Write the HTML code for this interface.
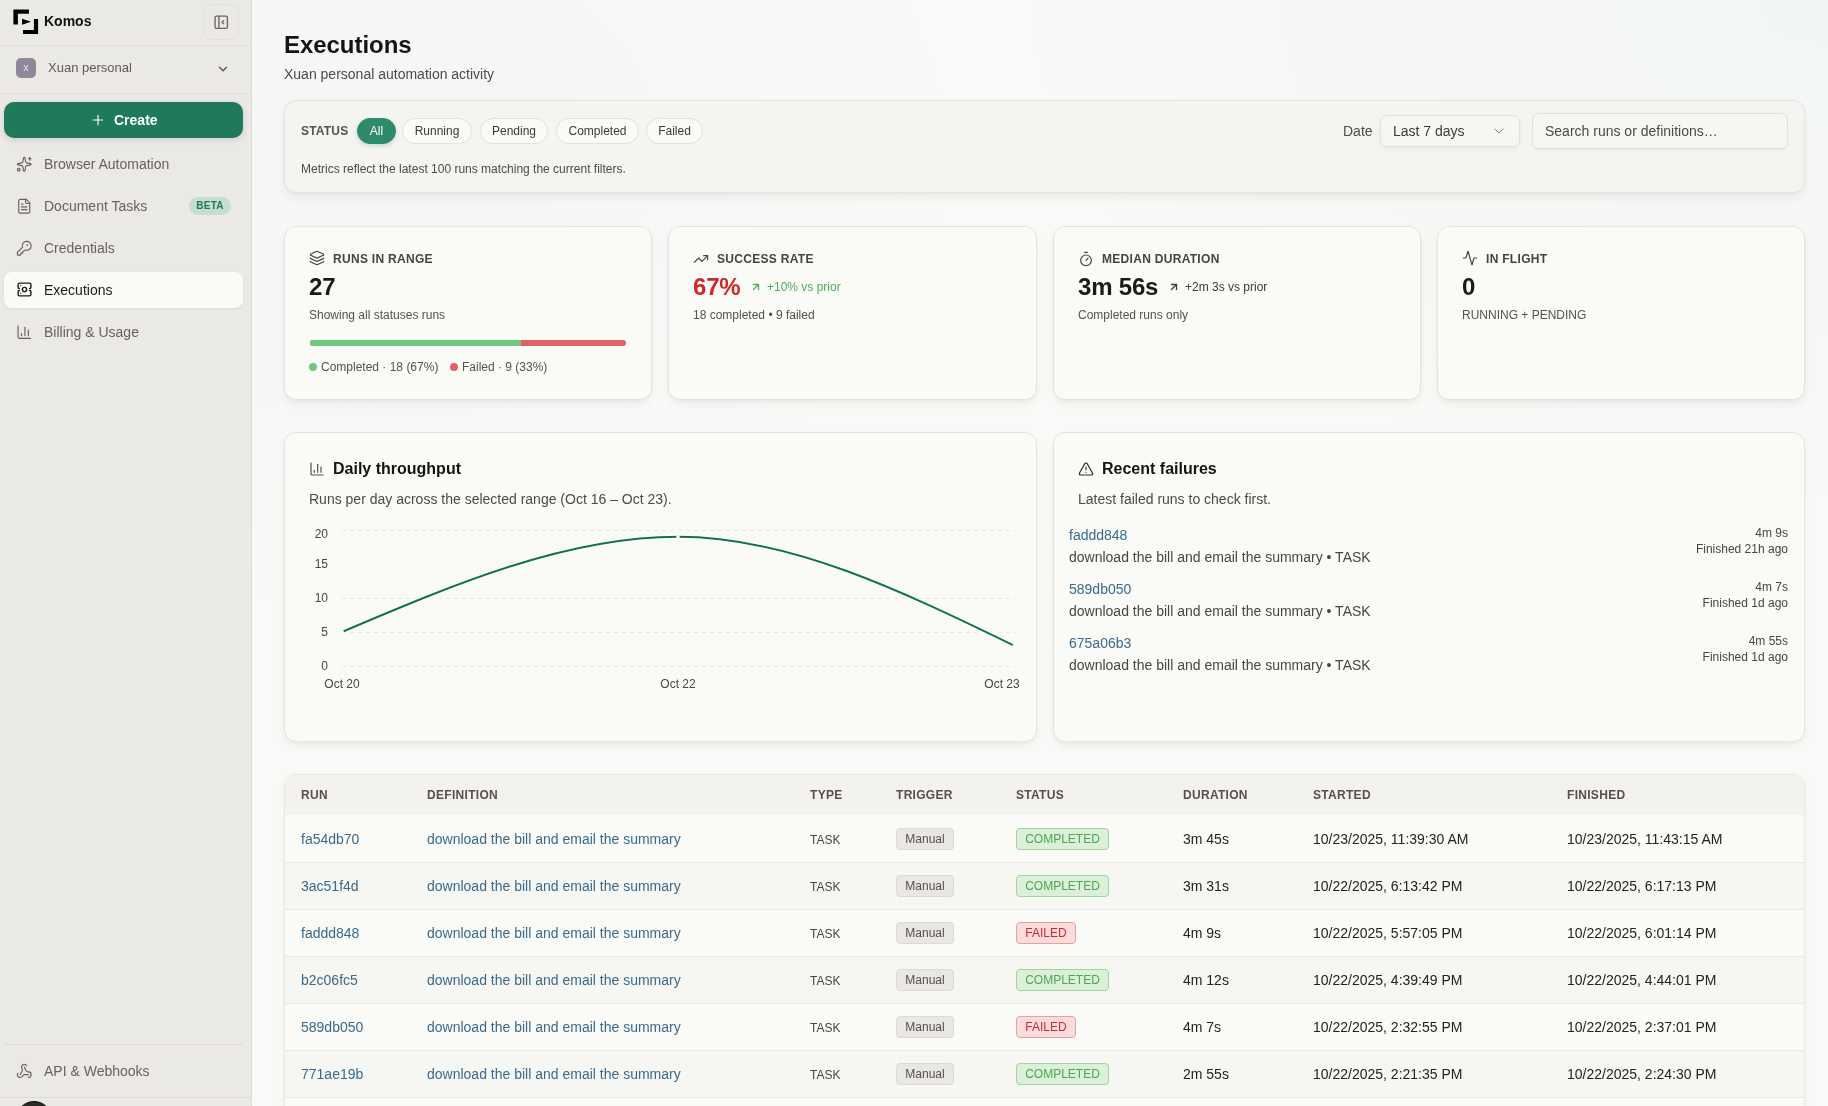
<!DOCTYPE html>
<html><head><meta charset="utf-8">
<style>
*{box-sizing:border-box;margin:0;padding:0}
html,body{width:1828px;height:1106px;overflow:hidden}
#root{position:absolute;left:0;top:0;width:1828px;height:1106px;overflow:hidden;will-change:transform;background:radial-gradient(700px 450px at 250px 150px, rgba(240,237,248,0.4), rgba(240,237,248,0) 100%), radial-gradient(800px 500px at 1828px 0px, rgba(232,242,240,0.45), rgba(232,242,240,0) 100%), #f9f9f7}
body{font-family:"Liberation Sans",sans-serif;background:#f8f7f5;color:#1c1917;position:relative}
.a{position:absolute;white-space:nowrap;line-height:normal}
svg{position:absolute;overflow:visible}
.ic{fill:none;stroke:currentColor;stroke-width:2;stroke-linecap:round;stroke-linejoin:round}
#side{position:absolute;left:0;top:0;width:252px;height:1106px;background:#ebe9e5;border-right:1px solid #dfdcd7}
.hr{position:absolute;height:1px;background:#dcd9d4}
.nav{font-size:14px;color:#67625c}
.card{position:absolute;background:#fafaf6;border:1px solid #e6e4df;border-radius:12px;box-shadow:0 5px 10px -2px rgba(40,40,30,0.07), 0 1px 3px rgba(40,40,30,0.03)}
.lbl{font-size:12px;font-weight:bold;color:#48433d;letter-spacing:0.3px}
.big{font-size:24px;font-weight:bold;color:#1a1a1a;letter-spacing:-0.2px}
.sub{font-size:12px;color:#57524c}
.badge{position:absolute;height:22px;border-radius:4px;border:1px solid;font-size:12px;line-height:20px;text-align:center;white-space:nowrap}
.pill{position:absolute;height:26px;border-radius:13px;border:1px solid #e3e1dc;background:#fafaf6;font-size:12px;color:#3f3a35;line-height:24px;text-align:center}
</style></head><body>
<div id="root">

<!-- SIDEBAR -->
<div id="side">
  <svg style="left:13px;top:9px" width="25" height="25" viewBox="0 0 25 25">
    <path d="M0.4 0.4H15.9V4.8H4.9V15.6H0.4Z" fill="#000"/>
    <path d="M25.1 10V25H10V21H20.9V10Z" fill="#000"/>
    <path d="M9 9.8L18 12.8L9 15.8Z" fill="#000"/>
  </svg>
  <div class="a" style="left:44px;top:13px;font-size:14px;font-weight:bold;color:#111">Komos</div>
  <div style="position:absolute;left:203px;top:4px;width:36px;height:36px;border:1px solid #e2e0db;border-radius:9px"></div>
  <svg class="ic" style="left:211.8px;top:12.6px;color:#6b6864;stroke-width:1.8" width="18.5" height="18.5" viewBox="0 0 24 24">
    <rect x="4" y="4" width="16" height="16" rx="2"/><path d="M9 4v16"/><path d="M15 10l-2 2l2 2"/>
  </svg>
  <div class="hr" style="left:0;top:45px;width:251px;background:#e0ddd8"></div>
  <div style="position:absolute;left:16px;top:58px;width:20px;height:20px;border-radius:5px;background:#8f8898;color:#e4e0e8;font-size:11px;text-align:center;line-height:18px">x</div>
  <div class="a" style="left:48px;top:60px;font-size:13px;color:#5f5a55">Xuan personal</div>
  <svg class="ic" style="left:216px;top:61.8px;color:#55514c;stroke-width:2.2" width="14" height="14" viewBox="0 0 24 24"><path d="M6 9l6 6l6-6"/></svg>
  <div class="hr" style="left:0;top:93px;width:251px;background:#e0ddd8"></div>

  <div style="position:absolute;left:4px;top:102px;width:239px;height:36px;border-radius:10px;background:#1e7a5a;box-shadow:0 2px 6px rgba(0,0,0,0.12)"></div>
  <svg class="ic" style="left:91px;top:113px;color:#fff;stroke-width:2" width="14" height="14" viewBox="0 0 24 24"><path d="M12 4v16M4 12h16"/></svg>
  <div class="a" style="left:114px;top:112px;font-size:14px;font-weight:bold;color:#fff">Create</div>

  <!-- nav -->
  <svg class="ic" style="left:15.75px;top:155.75px;color:#66615b;stroke-width:1.65" width="16.5" height="16.5" viewBox="0 0 24 24"><path d="M11.017 2.814a1 1 0 0 1 1.966 0l1.051 5.558a2 2 0 0 0 1.594 1.594l5.558 1.051a1 1 0 0 1 0 1.966l-5.558 1.051a2 2 0 0 0-1.594 1.594l-1.051 5.558a1 1 0 0 1-1.966 0l-1.051-5.558a2 2 0 0 0-1.594-1.594l-5.558-1.051a1 1 0 0 1 0-1.966l5.558-1.051a2 2 0 0 0 1.594-1.594z"/><path d="M20 2v4"/><path d="M22 4h-4"/><circle cx="4" cy="20" r="2"/></svg>
  <div class="a nav" style="left:44px;top:156px">Browser Automation</div>

  <svg class="ic" style="left:15.75px;top:197.75px;color:#66615b;stroke-width:1.65" width="16.5" height="16.5" viewBox="0 0 24 24"><path d="M15 2H6a2 2 0 0 0-2 2v16a2 2 0 0 0 2 2h12a2 2 0 0 0 2-2V7Z"/><path d="M14 2v4a2 2 0 0 0 2 2h4"/><path d="M10 9H8"/><path d="M16 13H8"/><path d="M16 17H8"/></svg>
  <div class="a nav" style="left:44px;top:198px">Document Tasks</div>
  <div style="position:absolute;left:189px;top:197px;width:42px;height:18px;border-radius:9px;background:#c6ddd0;color:#1f7a55;font-size:10px;font-weight:bold;letter-spacing:0.2px;text-align:center;line-height:18px">BETA</div>

  <svg class="ic" style="left:15.75px;top:239.75px;color:#66615b;stroke-width:1.65" width="16.5" height="16.5" viewBox="0 0 24 24"><path d="M2.586 17.414A2 2 0 0 0 2 18.828V21a1 1 0 0 0 1 1h3a1 1 0 0 0 1-1v-1a1 1 0 0 1 1-1h1a1 1 0 0 0 1-1v-1a1 1 0 0 1 1-1h.172a2 2 0 0 0 1.414-.586l.814-.814a6.5 6.5 0 1 0-4-4z"/><circle cx="16.5" cy="7.5" r=".5" fill="currentColor"/></svg>
  <div class="a nav" style="left:44px;top:240px">Credentials</div>

  <div style="position:absolute;left:4px;top:272px;width:239px;height:36px;border-radius:8px;background:#fafaf7;box-shadow:0 1px 3px rgba(0,0,0,0.06)"></div>
  <svg class="ic" style="left:15.5px;top:281px;color:#1c1a18;stroke-width:2" width="17" height="17" viewBox="0 0 24 24"><path d="M4.8 10.6A1.8 1.8 0 0 1 3 8.8V5A2 2 0 0 1 5 3H19A2 2 0 0 1 21 5V8.8A1.8 1.8 0 0 1 19.2 10.6"/><path d="M4.8 13.4A1.8 1.8 0 0 0 3 15.2V19A2 2 0 0 0 5 21H19A2 2 0 0 0 21 19V15.2A1.8 1.8 0 0 0 19.2 13.4"/><circle cx="12" cy="12" r="3"/><rect x="5.6" y="5.6" width="2" height="2" fill="currentColor" stroke="none" opacity="0.65"/><rect x="5.6" y="16.4" width="2" height="2" fill="currentColor" stroke="none" opacity="0.65"/></svg>
  <div class="a nav" style="left:44px;top:282px;color:#1c1a18">Executions</div>

  <svg class="ic" style="left:15.75px;top:323.75px;color:#66615b;stroke-width:1.65" width="16.5" height="16.5" viewBox="0 0 24 24"><path d="M3 3v16a2 2 0 0 0 2 2h16"/><path d="M18 17V9"/><path d="M13 17V5"/><path d="M8 17v-3"/></svg>
  <div class="a nav" style="left:44px;top:324px">Billing &amp; Usage</div>

  <div class="hr" style="left:4px;top:1044px;width:239px;background:#dedbd6"></div>
  <svg class="ic" style="left:15.75px;top:1062.75px;color:#66615b;stroke-width:1.65" width="16.5" height="16.5" viewBox="0 0 24 24"><path d="M18 16.98h-5.99c-1.1 0-1.95.94-2.48 1.9A4 4 0 0 1 2 17c.01-.7.2-1.4.57-2"/><path d="m6 17 3.13-5.78c.53-.97.1-2.18-.5-3.1a4 4 0 1 1 6.89-4.06"/><path d="m12 6 3.13 5.73C15.66 12.7 16.9 13 18 13a4 4 0 0 1 0 8"/></svg>
  <div class="a nav" style="left:44px;top:1063px">API &amp; Webhooks</div>
  <div class="hr" style="left:0;top:1097px;width:251px;background:#dedbd6"></div>
  <div style="position:absolute;left:16px;top:1101px;width:36px;height:36px;border-radius:18px;background:#2b2a28;border:1px solid #111"></div>
</div>

<!-- MAIN HEADER -->
<div class="a" style="left:284px;top:31px;font-size:24px;font-weight:bold;color:#151412;letter-spacing:-0.05px">Executions</div>
<div class="a" style="left:284px;top:66px;font-size:14px;color:#4f4a45">Xuan personal automation activity</div>

<!-- FILTER PANEL -->
<div class="card" style="left:284px;top:100px;width:1521px;height:93px;background:#f4f4f0;border-color:#e4e3de;box-shadow:0 6px 12px -3px rgba(40,40,30,0.08), 0 1px 3px rgba(40,40,30,0.03)"></div>
<div class="a lbl" style="left:301px;top:124px;color:#57524c;letter-spacing:0.2px">STATUS</div>
<div class="pill" style="left:357px;top:118px;width:39px;background:#2e8a6a;border-color:#2e8a6a;color:#fff;box-shadow:0 2px 4px rgba(30,120,90,0.2)">All</div>
<div class="pill" style="left:402px;top:118px;width:70px">Running</div>
<div class="pill" style="left:480px;top:118px;width:68px">Pending</div>
<div class="pill" style="left:556px;top:118px;width:83px">Completed</div>
<div class="pill" style="left:646px;top:118px;width:57px">Failed</div>
<div class="a" style="left:301px;top:162px;font-size:12px;color:#4f4a45">Metrics reflect the latest 100 runs matching the current filters.</div>

<div class="a" style="left:1343px;top:123px;font-size:14px;color:#4f4a45">Date</div>
<div style="position:absolute;left:1380px;top:115px;width:140px;height:32px;border:1px solid #e2e0db;border-radius:7px;background:#f6f6f2;box-shadow:0 2px 5px rgba(0,0,0,0.05)"></div>
<div class="a" style="left:1393px;top:123px;font-size:14px;color:#3f3a35">Last 7 days</div>
<svg class="ic" style="left:1491px;top:123px;color:#85807a;stroke-width:1.5" width="16" height="16" viewBox="0 0 24 24"><path d="M6 9l6 6l6-6"/></svg>
<div style="position:absolute;left:1532px;top:113px;width:256px;height:36px;border:1px solid #e2e0db;border-radius:7px;background:#f6f6f2;box-shadow:0 2px 5px rgba(0,0,0,0.04)"></div>
<div class="a" style="left:1545px;top:123px;font-size:14px;color:#4f4a45">Search runs or definitions…</div>

<!-- METRIC CARDS -->
<div class="card" style="left:284px;top:226px;width:368.25px;height:173.5px"></div>
<div class="card" style="left:668.25px;top:226px;width:368.25px;height:173.5px"></div>
<div class="card" style="left:1052.5px;top:226px;width:368.25px;height:173.5px"></div>
<div class="card" style="left:1436.75px;top:226px;width:368.25px;height:173.5px"></div>

<!-- card 1 -->
<svg class="ic" style="left:309px;top:250px;color:#48433d;stroke-width:1.8" width="16" height="16" viewBox="0 0 24 24"><path d="M12.83 2.18a2 2 0 0 0-1.66 0L2.6 6.08a1 1 0 0 0 0 1.83l8.58 3.91a2 2 0 0 0 1.66 0l8.58-3.9a1 1 0 0 0 0-1.83z"/><path d="M2 12a1 1 0 0 0 .58.91l8.6 3.91a2 2 0 0 0 1.65 0l8.58-3.9A1 1 0 0 0 22 12"/><path d="M2 17a1 1 0 0 0 .58.91l8.6 3.91a2 2 0 0 0 1.65 0l8.58-3.9A1 1 0 0 0 22 17"/></svg>
<div class="a lbl" style="left:333px;top:252px">RUNS IN RANGE</div>
<div class="a big" style="left:309px;top:273px">27</div>
<div class="a sub" style="left:309px;top:308px">Showing all statuses runs</div>
<div style="position:absolute;left:310px;top:340px;width:316px;height:6px;border-radius:3px;background:#e06266;overflow:hidden"><div style="width:211px;height:6px;background:#72c77f"></div></div>
<div style="position:absolute;left:309px;top:363px;width:8px;height:8px;border-radius:4px;background:#72c77f"></div>
<div class="a sub" style="left:321px;top:360px">Completed · 18 (67%)</div>
<div style="position:absolute;left:450px;top:363px;width:8px;height:8px;border-radius:4px;background:#e06266"></div>
<div class="a sub" style="left:462px;top:360px">Failed · 9 (33%)</div>

<!-- card 2 -->
<svg class="ic" style="left:693px;top:251px;color:#48433d;stroke-width:1.8" width="16" height="16" viewBox="0 0 24 24"><path d="M16 7h6v6"/><path d="m22 7-8.5 8.5-5-5L2 17"/></svg>
<div class="a lbl" style="left:717px;top:252px">SUCCESS RATE</div>
<div class="a big" style="left:693px;top:273px;color:#d0262e">67%</div>
<svg class="ic" style="left:750px;top:281px;color:#4caf5a;stroke-width:2.6" width="12" height="12" viewBox="0 0 24 24"><path d="M7 7h10v10"/><path d="M7 17 17 7"/></svg>
<div class="a sub" style="left:767px;top:280px;color:#4caf5a">+10% vs prior</div>
<div class="a sub" style="left:693px;top:308px">18 completed • 9 failed</div>

<!-- card 3 -->
<svg class="ic" style="left:1078px;top:251px;color:#48433d;stroke-width:1.8" width="16" height="16" viewBox="0 0 24 24"><path d="M10 2h4"/><path d="M12 14l3-3"/><circle cx="12" cy="14" r="8"/></svg>
<div class="a lbl" style="left:1102px;top:252px">MEDIAN DURATION</div>
<div class="a big" style="left:1078px;top:273px">3m 56s</div>
<svg class="ic" style="left:1168px;top:281px;color:#3f3a35;stroke-width:2.6" width="12" height="12" viewBox="0 0 24 24"><path d="M7 7h10v10"/><path d="M7 17 17 7"/></svg>
<div class="a sub" style="left:1185px;top:280px;color:#3f3a35">+2m 3s vs prior</div>
<div class="a sub" style="left:1078px;top:308px">Completed runs only</div>

<!-- card 4 -->
<svg class="ic" style="left:1462px;top:250px;color:#48433d;stroke-width:1.8" width="16" height="16" viewBox="0 0 24 24"><path d="M22 12h-2.48a2 2 0 0 0-1.93 1.46l-2.35 8.36a.25.25 0 0 1-.48 0L9.24 2.18a.25.25 0 0 0-.48 0l-2.35 8.36A2 2 0 0 1 4.49 12H2"/></svg>
<div class="a lbl" style="left:1486px;top:252px">IN FLIGHT</div>
<div class="a big" style="left:1462px;top:273px">0</div>
<div class="a sub" style="left:1462px;top:308px">RUNNING + PENDING</div>


<!-- THROUGHPUT CARD -->
<div class="card" style="left:284px;top:432px;width:752.5px;height:309.5px"></div>
<svg class="ic" style="left:309px;top:461px;color:#57524c;stroke-width:1.8" width="16" height="16" viewBox="0 0 24 24"><path d="M3 3v16a2 2 0 0 0 2 2h16"/><path d="M18 17V9"/><path d="M13 17V5"/><path d="M8 17v-3"/></svg>
<div class="a" style="left:333px;top:460px;font-size:16px;font-weight:bold;color:#151412">Daily throughput</div>
<div class="a" style="left:309px;top:491px;font-size:14px;color:#4f4a45">Runs per day across the selected range (Oct 16 – Oct 23).</div>
<svg style="left:0;top:0" width="1828" height="1106">
  <g stroke="#e9e8e3" stroke-width="1" stroke-dasharray="4 4">
    <line x1="342" y1="530.5" x2="1015" y2="530.5"/>
    <line x1="342" y1="598.5" x2="1015" y2="598.5"/>
    <line x1="342" y1="632.5" x2="1015" y2="632.5"/>
    <line x1="342" y1="666.5" x2="1015" y2="666.5"/>
  </g>
  <g font-family="Liberation Sans" font-size="12" fill="#4a4540" text-anchor="end">
    <text x="328" y="538">20</text><text x="328" y="568">15</text><text x="328" y="602">10</text><text x="328" y="636">5</text><text x="328" y="670">0</text>
  </g>
  <g font-family="Liberation Sans" font-size="12" fill="#4a4540" text-anchor="middle">
    <text x="342" y="688">Oct 20</text><text x="678" y="688">Oct 22</text><text x="1002" y="688">Oct 23</text>
  </g>
  <path d="M342,632 C454,584.4 566,536.8 678,536.8 C790,536.8 902,591.2 1014,645.6" fill="none" stroke="#ffffff" stroke-width="5" stroke-opacity="0.9"/>
  <path d="M342,632 C454,584.4 566,536.8 678,536.8 C790,536.8 902,591.2 1014,645.6" fill="none" stroke="#137050" stroke-width="2"/>
  <g fill="#fff"><circle cx="342" cy="632" r="2"/><circle cx="678" cy="536.8" r="1.8"/><circle cx="1014.5" cy="645.8" r="2"/></g>
</svg>

<!-- FAILURES CARD -->
<div class="card" style="left:1052.5px;top:432px;width:752.5px;height:309.5px"></div>
<svg class="ic" style="left:1078px;top:461px;color:#3b3024;stroke-width:1.8" width="16" height="16" viewBox="0 0 24 24"><path d="m21.73 18-8-14a2 2 0 0 0-3.48 0l-8 14A2 2 0 0 0 4 21h16a2 2 0 0 0 1.73-3"/><path d="M12 9v4"/><path d="M12 17h.01"/></svg>
<div class="a" style="left:1102px;top:460px;font-size:16px;font-weight:bold;color:#151412">Recent failures</div>
<div class="a" style="left:1078px;top:491px;font-size:14px;color:#4f4a45">Latest failed runs to check first.</div>

<div class="a" style="left:1069px;top:527px;font-size:14px;color:#3a6b8c">faddd848</div>
<div class="a" style="left:1069px;top:549px;font-size:14px;color:#4a4540">download the bill and email the summary • TASK</div>
<div class="a" style="right:40px;top:526px;font-size:12px;color:#4a4540;text-align:right">4m 9s</div>
<div class="a" style="right:40px;top:542px;font-size:12px;color:#4a4540;text-align:right">Finished 21h ago</div>
<div class="a" style="left:1069px;top:581px;font-size:14px;color:#3a6b8c">589db050</div>
<div class="a" style="left:1069px;top:603px;font-size:14px;color:#4a4540">download the bill and email the summary • TASK</div>
<div class="a" style="right:40px;top:580px;font-size:12px;color:#4a4540;text-align:right">4m 7s</div>
<div class="a" style="right:40px;top:596px;font-size:12px;color:#4a4540;text-align:right">Finished 1d ago</div>
<div class="a" style="left:1069px;top:635px;font-size:14px;color:#3a6b8c">675a06b3</div>
<div class="a" style="left:1069px;top:657px;font-size:14px;color:#4a4540">download the bill and email the summary • TASK</div>
<div class="a" style="right:40px;top:634px;font-size:12px;color:#4a4540;text-align:right">4m 55s</div>
<div class="a" style="right:40px;top:650px;font-size:12px;color:#4a4540;text-align:right">Finished 1d ago</div>

<!-- TABLE -->
<div style="position:absolute;left:284px;top:774px;width:1521px;height:400px;background:#fafaf6;border:1px solid #e9e7e2;border-radius:12px;overflow:hidden;box-shadow:0 2px 6px rgba(40,30,20,0.05)">
  <div style="position:absolute;left:0;top:0;width:100%;height:40px;background:#f3f2ef"></div>

  <div class="a lbl" style="left:16px;top:13px;color:#55504a">RUN</div>
  <div class="a lbl" style="left:142px;top:13px;color:#55504a">DEFINITION</div>
  <div class="a lbl" style="left:525px;top:13px;color:#55504a">TYPE</div>
  <div class="a lbl" style="left:611px;top:13px;color:#55504a">TRIGGER</div>
  <div class="a lbl" style="left:731px;top:13px;color:#55504a">STATUS</div>
  <div class="a lbl" style="left:898px;top:13px;color:#55504a">DURATION</div>
  <div class="a lbl" style="left:1028px;top:13px;color:#55504a">STARTED</div>
  <div class="a lbl" style="left:1282px;top:13px;color:#55504a">FINISHED</div>
  <div style="position:absolute;left:0;top:40px;width:100%;height:47px;background:#fafaf6"></div>
  <div class="a" style="left:16px;top:56px;font-size:14px;color:#3a6b8c">fa54db70</div>
  <div class="a" style="left:142px;top:56px;font-size:14px;color:#3a6b8c">download the bill and email the summary</div>
  <div class="a" style="left:525px;top:58px;font-size:12px;color:#4a4540">TASK</div>
  <div class="badge" style="left:611px;top:53px;width:58px;background:#e9e7e3;border-color:#dddad5;color:#55504a">Manual</div>
  <div class="badge" style="left:731px;top:53px;width:93px;background:#dcefd9;border-color:#9fd39f;color:#49a856">COMPLETED</div>
  <div class="a" style="left:898px;top:56px;font-size:14px;color:#262220">3m 45s</div>
  <div class="a" style="left:1028px;top:56px;font-size:14px;color:#262220">10/23/2025, 11:39:30 AM</div>
  <div class="a" style="left:1282px;top:56px;font-size:14px;color:#262220">10/23/2025, 11:43:15 AM</div>
  <div style="position:absolute;left:0;top:87px;width:100%;height:47px;background:#f6f6f2;border-top:1px solid #e8e6e1"></div>
  <div class="a" style="left:16px;top:103px;font-size:14px;color:#3a6b8c">3ac51f4d</div>
  <div class="a" style="left:142px;top:103px;font-size:14px;color:#3a6b8c">download the bill and email the summary</div>
  <div class="a" style="left:525px;top:105px;font-size:12px;color:#4a4540">TASK</div>
  <div class="badge" style="left:611px;top:100px;width:58px;background:#e9e7e3;border-color:#dddad5;color:#55504a">Manual</div>
  <div class="badge" style="left:731px;top:100px;width:93px;background:#dcefd9;border-color:#9fd39f;color:#49a856">COMPLETED</div>
  <div class="a" style="left:898px;top:103px;font-size:14px;color:#262220">3m 31s</div>
  <div class="a" style="left:1028px;top:103px;font-size:14px;color:#262220">10/22/2025, 6:13:42 PM</div>
  <div class="a" style="left:1282px;top:103px;font-size:14px;color:#262220">10/22/2025, 6:17:13 PM</div>
  <div style="position:absolute;left:0;top:134px;width:100%;height:47px;background:#fafaf6;border-top:1px solid #e8e6e1"></div>
  <div class="a" style="left:16px;top:150px;font-size:14px;color:#3a6b8c">faddd848</div>
  <div class="a" style="left:142px;top:150px;font-size:14px;color:#3a6b8c">download the bill and email the summary</div>
  <div class="a" style="left:525px;top:152px;font-size:12px;color:#4a4540">TASK</div>
  <div class="badge" style="left:611px;top:147px;width:58px;background:#e9e7e3;border-color:#dddad5;color:#55504a">Manual</div>
  <div class="badge" style="left:731px;top:147px;width:60px;background:#fadcdc;border-color:#ec9ea0;color:#cf2a2f">FAILED</div>
  <div class="a" style="left:898px;top:150px;font-size:14px;color:#262220">4m 9s</div>
  <div class="a" style="left:1028px;top:150px;font-size:14px;color:#262220">10/22/2025, 5:57:05 PM</div>
  <div class="a" style="left:1282px;top:150px;font-size:14px;color:#262220">10/22/2025, 6:01:14 PM</div>
  <div style="position:absolute;left:0;top:181px;width:100%;height:47px;background:#f6f6f2;border-top:1px solid #e8e6e1"></div>
  <div class="a" style="left:16px;top:197px;font-size:14px;color:#3a6b8c">b2c06fc5</div>
  <div class="a" style="left:142px;top:197px;font-size:14px;color:#3a6b8c">download the bill and email the summary</div>
  <div class="a" style="left:525px;top:199px;font-size:12px;color:#4a4540">TASK</div>
  <div class="badge" style="left:611px;top:194px;width:58px;background:#e9e7e3;border-color:#dddad5;color:#55504a">Manual</div>
  <div class="badge" style="left:731px;top:194px;width:93px;background:#dcefd9;border-color:#9fd39f;color:#49a856">COMPLETED</div>
  <div class="a" style="left:898px;top:197px;font-size:14px;color:#262220">4m 12s</div>
  <div class="a" style="left:1028px;top:197px;font-size:14px;color:#262220">10/22/2025, 4:39:49 PM</div>
  <div class="a" style="left:1282px;top:197px;font-size:14px;color:#262220">10/22/2025, 4:44:01 PM</div>
  <div style="position:absolute;left:0;top:228px;width:100%;height:47px;background:#fafaf6;border-top:1px solid #e8e6e1"></div>
  <div class="a" style="left:16px;top:244px;font-size:14px;color:#3a6b8c">589db050</div>
  <div class="a" style="left:142px;top:244px;font-size:14px;color:#3a6b8c">download the bill and email the summary</div>
  <div class="a" style="left:525px;top:246px;font-size:12px;color:#4a4540">TASK</div>
  <div class="badge" style="left:611px;top:241px;width:58px;background:#e9e7e3;border-color:#dddad5;color:#55504a">Manual</div>
  <div class="badge" style="left:731px;top:241px;width:60px;background:#fadcdc;border-color:#ec9ea0;color:#cf2a2f">FAILED</div>
  <div class="a" style="left:898px;top:244px;font-size:14px;color:#262220">4m 7s</div>
  <div class="a" style="left:1028px;top:244px;font-size:14px;color:#262220">10/22/2025, 2:32:55 PM</div>
  <div class="a" style="left:1282px;top:244px;font-size:14px;color:#262220">10/22/2025, 2:37:01 PM</div>
  <div style="position:absolute;left:0;top:275px;width:100%;height:47px;background:#f6f6f2;border-top:1px solid #e8e6e1"></div>
  <div class="a" style="left:16px;top:291px;font-size:14px;color:#3a6b8c">771ae19b</div>
  <div class="a" style="left:142px;top:291px;font-size:14px;color:#3a6b8c">download the bill and email the summary</div>
  <div class="a" style="left:525px;top:293px;font-size:12px;color:#4a4540">TASK</div>
  <div class="badge" style="left:611px;top:288px;width:58px;background:#e9e7e3;border-color:#dddad5;color:#55504a">Manual</div>
  <div class="badge" style="left:731px;top:288px;width:93px;background:#dcefd9;border-color:#9fd39f;color:#49a856">COMPLETED</div>
  <div class="a" style="left:898px;top:291px;font-size:14px;color:#262220">2m 55s</div>
  <div class="a" style="left:1028px;top:291px;font-size:14px;color:#262220">10/22/2025, 2:21:35 PM</div>
  <div class="a" style="left:1282px;top:291px;font-size:14px;color:#262220">10/22/2025, 2:24:30 PM</div>
  <div style="position:absolute;left:0;top:322px;width:100%;height:47px;background:#fafaf6;border-top:1px solid #e8e6e1"></div>
  <div class="a" style="left:16px;top:338px;font-size:14px;color:#3a6b8c">675a06b3</div>
  <div class="a" style="left:142px;top:338px;font-size:14px;color:#3a6b8c">download the bill and email the summary</div>
  <div class="a" style="left:525px;top:340px;font-size:12px;color:#4a4540">TASK</div>
  <div class="badge" style="left:611px;top:335px;width:58px;background:#e9e7e3;border-color:#dddad5;color:#55504a">Manual</div>
  <div class="badge" style="left:731px;top:335px;width:60px;background:#fadcdc;border-color:#ec9ea0;color:#cf2a2f">FAILED</div>
  <div class="a" style="left:898px;top:338px;font-size:14px;color:#262220">4m 55s</div>
  <div class="a" style="left:1028px;top:338px;font-size:14px;color:#262220">10/22/2025, 1:00:00 PM</div>
  <div class="a" style="left:1282px;top:338px;font-size:14px;color:#262220">10/22/2025, 1:04:55 PM</div>
</div>

</div>
</body></html>
